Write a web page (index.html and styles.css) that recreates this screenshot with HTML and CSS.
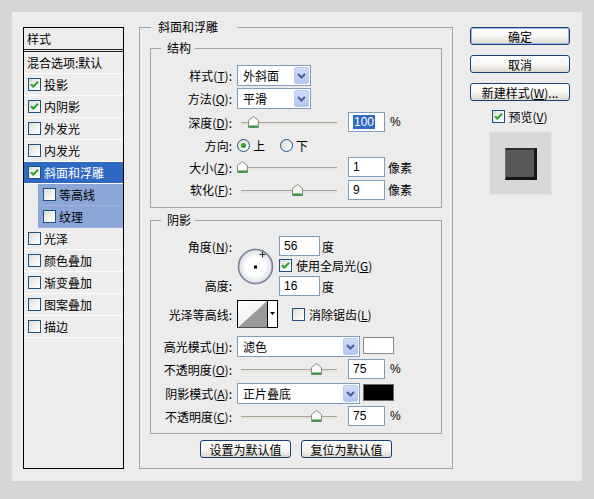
FILE: index.html
```html
<!DOCTYPE html>
<html>
<head>
<meta charset="utf-8">
<link rel="stylesheet" href="styles.css">
</head>
<body>
<div class="dialog">
  <div class="list">
    <div class="lhead">样式</div>
    <div class="row plain">混合选项:默认</div>
    <div class="row"><span class="cb"><svg width="11" height="11" viewBox="0 0 11 11"><path d="M2 5.2 L4.3 7.6 L9 2.8" stroke="#21a121" stroke-width="2" fill="none"/></svg></span>投影</div>
    <div class="row"><span class="cb"><svg width="11" height="11" viewBox="0 0 11 11"><path d="M2 5.2 L4.3 7.6 L9 2.8" stroke="#21a121" stroke-width="2" fill="none"/></svg></span>内阴影</div>
    <div class="row"><span class="cb"></span>外发光</div>
    <div class="row"><span class="cb"></span>内发光</div>
    <div class="row selected"><span class="cb"><svg width="11" height="11" viewBox="0 0 11 11"><path d="M2 5.2 L4.3 7.6 L9 2.8" stroke="#21a121" stroke-width="2" fill="none"/></svg></span>斜面和浮雕</div>
    <div class="row sub"><span class="cb"></span>等高线</div>
    <div class="row sub"><span class="cb"></span>纹理</div>
    <div class="row"><span class="cb"></span>光泽</div>
    <div class="row"><span class="cb"></span>颜色叠加</div>
    <div class="row"><span class="cb"></span>渐变叠加</div>
    <div class="row"><span class="cb"></span>图案叠加</div>
    <div class="row"><span class="cb"></span>描边</div>
  </div>

  <fieldset class="outer">
    <legend class="lg-outer">斜面和浮雕</legend>

    <fieldset class="inner struct">
      <legend class="lg-inner">结构</legend>
      <div class="frow r24">
        <span class="lbl">样式(<u>T</u>):</span>
        <div class="sel w74"><span class="st">外斜面</span><i class="arr"><svg width="15" height="17" viewBox="0 0 15 17"><path d="M4 7 L7.5 10.5 L11 7" stroke="#4a5f8e" stroke-width="2" fill="none"/></svg></i></div>
      </div>
      <div class="frow r23">
        <span class="lbl">方法(<u>Q</u>):</span>
        <div class="sel w74"><span class="st">平滑</span><i class="arr"><svg width="15" height="17" viewBox="0 0 15 17"><path d="M4 7 L7.5 10.5 L11 7" stroke="#4a5f8e" stroke-width="2" fill="none"/></svg></i></div>
      </div>
      <div class="frow r24">
        <span class="lbl">深度(<u>D</u>):</span>
        <div class="sld"><span class="thumb" style="left:11px"><svg width="11" height="12" viewBox="0 0 11 12"><path d="M0.5 4.5 L5.5 0.5 L10.5 4.5 L10.5 11.5 L0.5 11.5 Z" fill="#fbfbf8" stroke="#8a8a84"/><path d="M1 10.5 H10" stroke="#2f9a3a" stroke-width="2"/></svg></span></div>
        <div class="inp"><span class="hl">100</span></div>
        <span class="unit">%</span>
      </div>
      <div class="frow r22">
        <span class="lbl">方向:</span>
        <span class="rad on"></span><span class="rtxt">上</span>
        <span class="rad gap"></span><span class="rtxt">下</span>
      </div>
      <div class="frow r22">
        <span class="lbl">大小(<u>Z</u>):</span>
        <div class="sld"><span class="thumb" style="left:0px"><svg width="11" height="12" viewBox="0 0 11 12"><path d="M0.5 4.5 L5.5 0.5 L10.5 4.5 L10.5 11.5 L0.5 11.5 Z" fill="#fbfbf8" stroke="#8a8a84"/><path d="M1 10.5 H10" stroke="#2f9a3a" stroke-width="2"/></svg></span></div>
        <div class="inp">1</div>
        <span class="unit px">像素</span>
      </div>
      <div class="frow r23">
        <span class="lbl">软化(<u>F</u>):</span>
        <div class="sld"><span class="thumb" style="left:55px"><svg width="11" height="12" viewBox="0 0 11 12"><path d="M0.5 4.5 L5.5 0.5 L10.5 4.5 L10.5 11.5 L0.5 11.5 Z" fill="#fbfbf8" stroke="#8a8a84"/><path d="M1 10.5 H10" stroke="#2f9a3a" stroke-width="2"/></svg></span></div>
        <div class="inp">9</div>
        <span class="unit px">像素</span>
      </div>
    </fieldset>

    <fieldset class="inner shadow">
      <legend class="lg-inner">阴影</legend>
      <div class="angle">
        <span class="lbl a1">角度(<u>N</u>):</span>
        <span class="dial"><svg width="37" height="37" viewBox="0 0 37 37"><defs><radialGradient id="dg" cx="50%" cy="50%" r="50%"><stop offset="0.55" stop-color="#ffffff"/><stop offset="1" stop-color="#d9dde6"/></radialGradient></defs><circle cx="18.5" cy="18.5" r="17" fill="url(#dg)" stroke="#7a8296" stroke-width="1.6"/><rect x="17" y="17.5" width="3" height="3" fill="#000"/><path d="M25.5 3.5 V9.5 M22.5 6.5 H28.5" stroke="#222" stroke-width="1"/></svg></span>
        <span class="c3 r1"><span class="inp num">56</span><span class="unit">度</span></span>
        <span class="c3 r2"><span class="cb"><svg width="11" height="11" viewBox="0 0 11 11"><path d="M2 5.2 L4.3 7.6 L9 2.8" stroke="#21a121" stroke-width="2" fill="none"/></svg></span><span class="ctxt">使用全局光(<u>G</u>)</span></span>
        <span class="lbl a3">高度:</span>
        <span class="c3 r3"><span class="inp num">16</span><span class="unit">度</span></span>
      </div>
      <div class="frow contour-row">
        <span class="lbl">光泽等高线:</span>
        <span class="contour"><svg width="41" height="28" viewBox="0 0 41 28"><defs><linearGradient id="cg" x1="0" y1="0" x2="1" y2="1"><stop offset="0" stop-color="#ffffff"/><stop offset="1" stop-color="#e6e6e6"/></linearGradient></defs><rect x="0.5" y="0.5" width="40" height="27" fill="url(#cg)" stroke="#000"/><polygon points="1,27.5 30,1 30,27.5" fill="#9a9a9a"/><line x1="30.5" y1="0" x2="30.5" y2="28" stroke="#000"/><rect x="31" y="1" width="9" height="26" fill="#fff"/><polygon points="33,12 38,12 35.5,15" fill="#000"/></svg></span>
        <span class="cb aa"></span><span class="ctxt">消除锯齿(<u>L</u>)</span>
      </div>
      <div class="frow hl-row">
        <span class="lbl">高光模式(<u>H</u>):</span>
        <div class="sel w123"><span class="st">滤色</span><i class="arr"><svg width="15" height="17" viewBox="0 0 15 17"><path d="M4 7 L7.5 10.5 L11 7" stroke="#4a5f8e" stroke-width="2" fill="none"/></svg></i></div>
        <span class="sw white"></span>
      </div>
      <div class="frow r22">
        <span class="lbl">不透明度(<u>O</u>):</span>
        <div class="sld"><span class="thumb" style="left:74px"><svg width="11" height="12" viewBox="0 0 11 12"><path d="M0.5 4.5 L5.5 0.5 L10.5 4.5 L10.5 11.5 L0.5 11.5 Z" fill="#fbfbf8" stroke="#8a8a84"/><path d="M1 10.5 H10" stroke="#2f9a3a" stroke-width="2"/></svg></span></div>
        <div class="inp">75</div>
        <span class="unit">%</span>
      </div>
      <div class="frow sh-row">
        <span class="lbl">阴影模式(<u>A</u>):</span>
        <div class="sel w123"><span class="st">正片叠底</span><i class="arr"><svg width="15" height="17" viewBox="0 0 15 17"><path d="M4 7 L7.5 10.5 L11 7" stroke="#4a5f8e" stroke-width="2" fill="none"/></svg></i></div>
        <span class="sw black"></span>
      </div>
      <div class="frow r22">
        <span class="lbl">不透明度(<u>C</u>):</span>
        <div class="sld"><span class="thumb" style="left:74px"><svg width="11" height="12" viewBox="0 0 11 12"><path d="M0.5 4.5 L5.5 0.5 L10.5 4.5 L10.5 11.5 L0.5 11.5 Z" fill="#fbfbf8" stroke="#8a8a84"/><path d="M1 10.5 H10" stroke="#2f9a3a" stroke-width="2"/></svg></span></div>
        <div class="inp">75</div>
        <span class="unit">%</span>
      </div>
    </fieldset>

    <div class="btnrow">
      <button class="btn wide">设置为默认值</button>
      <button class="btn wide">复位为默认值</button>
    </div>
  </fieldset>

  <div class="side">
    <button class="btn side-btn def">确定</button>
    <button class="btn side-btn">取消</button>
    <button class="btn side-btn">新建样式(<u>W</u>)...</button>
    <div class="preview-chk"><span class="cb"><svg width="11" height="11" viewBox="0 0 11 11"><path d="M2 5.2 L4.3 7.6 L9 2.8" stroke="#21a121" stroke-width="2" fill="none"/></svg></span><span class="ctxt">预览(<u>V</u>)</span></div>
    <div class="preview"><div class="sq"></div></div>
  </div>
</div>
</body>
</html>
```

FILE: styles.css
```css
* { box-sizing: border-box; }
html, body { margin: 0; padding: 0; }
body {
  width: 594px;
  height: 499px;
  overflow: hidden;
  background: #d6d6d6;
  font-family: "Noto Sans CJK SC", "Noto Sans", sans-serif;
  font-size: 12px;
  color: #000;
}
u { text-decoration: underline; text-underline-offset: 1px; }

.dialog {
  margin: 12px;
  width: 570px;
  height: 469px;
  background: #ececec;
  display: flex;
  align-items: flex-start;
  padding: 15px 12px 0 11px;
}

/* left style list */
.list {
  flex: none;
  width: 101px;
  height: 442px;
  border: 1px solid #000;
  background: #ededed;
}
.lhead {
  height: 24px;
  line-height: 21px;
  padding-left: 3px;
  border-bottom: 3px double #222;
}
.row {
  height: 22px;
  border-bottom: 1px solid #fbfbfb;
  display: flex;
  align-items: center;
  padding-left: 4px;
  line-height: 21px;
  white-space: nowrap;
}
.row.plain { padding-left: 3px; }
.row.selected { background: #3168c4; color: #fff; }
.row.sub { margin-left: 14px; background: #8ca6d8; padding-left: 5px; border-bottom-color: #9fb4de; }
.row .cb { margin-right: 3px; }

.cb {
  flex: none;
  width: 13px;
  height: 13px;
  border: 1px solid #1c5180;
  background: linear-gradient(135deg, #dcdcd6 0%, #f4f4f2 60%, #ffffff 100%);
  display: inline-flex;
  align-items: center;
  justify-content: center;
}
.cb svg { display: block; }

/* fieldsets */
fieldset {
  margin: 0;
  padding: 0;
  min-width: 0;
  border: 1px solid #a3a3a3;
}
legend {
  height: 16px;
  line-height: 16px;
  padding: 0;
}
.outer {
  flex: none;
  width: 314px;
  height: 450px;
  margin: -8px 0 0 15px;
  padding: 5px 10px 0 10px;
}
.lg-outer { margin-left: 1px; padding: 0 19px 0 7px; }
.lg-inner { margin-left: 10px; padding: 0 4px 0 6px; }
.inner { width: 292px; }
.struct { padding: 7px 0 6px 0; }
.shadow { margin-top: 4px; padding: 8px 0 6px 0; }

.frow { display: flex; align-items: center; white-space: nowrap; }
.r22 { height: 22px; }
.r23 { height: 23px; }
.r24 { height: 24px; }
.lbl {
  flex: none;
  width: 81px;
  margin-right: 5px;
  text-align: right;
}

/* select */
.sel {
  flex: none;
  height: 21px;
  border: 1px solid #7f9db9;
  background: #fff;
  display: flex;
  padding: 1px;
}
.w74 { width: 74px; }
.w123 { width: 123px; }
.st { flex: 1; padding-left: 4px; line-height: 17px; }
.arr {
  flex: none;
  width: 15px;
  height: 17px;
  border-radius: 2px;
  background: linear-gradient(#cfdcfb, #b3c7f5);
  border: 1px solid #b8c9ef;
  display: flex;
  align-items: center;
  justify-content: center;
}
.arr svg { display: block; margin: -1px; }

/* slider */
.sld {
  position: relative;
  flex: none;
  width: 104px;
  height: 12px;
}
.sld::before {
  content: "";
  position: absolute;
  left: 4px;
  right: 4px;
  top: 6px;
  height: 2px;
  border-top: 1px solid #a4a49c;
  background: #e4e4dc;
  border-radius: 1px 0 0 1px;
}
.thumb { position: absolute; top: 0; width: 11px; height: 12px; }
.thumb svg { display: block; }

/* inputs */
.inp {
  flex: none;
  width: 37px;
  height: 20px;
  margin-left: 7px;
  border: 1px solid #7f9db9;
  background: #fff;
  padding-left: 4px;
  line-height: 18px;
  font-family: "Liberation Sans", sans-serif;
  font-size: 12px;
}
.inp.num { width: 41px; margin-left: 0; }
.hl { background: #316ac5; color: #fff; padding: 0 1px; }
.unit { margin-left: 5px; font-family: "Liberation Sans", "Noto Sans CJK SC", sans-serif; }
.unit.px { margin-left: 3px; font-family: "Noto Sans CJK SC", sans-serif; }

/* radios */
.rad {
  flex: none;
  width: 13px;
  height: 13px;
  border-radius: 50%;
  border: 1px solid #1c5180;
  background: linear-gradient(135deg, #dcdcd6, #ffffff);
  display: inline-flex;
  align-items: center;
  justify-content: center;
}
.rad.on::after {
  content: "";
  width: 5px;
  height: 5px;
  border-radius: 50%;
  background: #2aa02a;
}
.rad.gap { margin-left: 15px; }
.rtxt { margin-left: 3px; }

/* angle block */
.angle {
  display: grid;
  grid-template-columns: 81px 36px 1fr;
  grid-template-rows: 20px 19px 21px;
  column-gap: 5px;
  height: 60px;
  align-items: center;
}
.angle .lbl { margin-right: 0; }
.a1 { grid-column: 1; grid-row: 1; }
.a3 { grid-column: 1; grid-row: 3; }
.dial { grid-column: 2; grid-row: 1 / 4; align-self: center; width: 37px; height: 37px; margin-top: 1px; }
.dial svg { display: block; }
.c3 { grid-column: 3; display: flex; align-items: center; margin-left: 1px; }
.r1 { grid-row: 1; }
.r2 { grid-row: 2; }
.r3 { grid-row: 3; align-self: end; }
.c3 .unit { margin-left: 2px; font-family: "Noto Sans CJK SC", sans-serif; }
.ctxt { margin-left: 4px; }

.contour-row { height: 28px; margin-top: 4px; }
.contour { flex: none; width: 41px; height: 28px; }
.contour svg { display: block; }
.cb.aa { margin-left: 14px; }

.hl-row { height: 23px; margin-top: 7px; }
.sh-row { height: 23px; margin-top: 2px; }
.sw {
  flex: none;
  width: 31px;
  height: 17px;
  margin-left: 3px;
  border: 1px solid #8a8a8a;
  align-self: flex-start;
  margin-top: 2px;
}
.sw.white { background: #fff; }
.sw.black { background: #000; border-color: #6a6a6a; }

/* buttons */
.btn {
  height: 18px;
  padding: 0;
  border: 1px solid #1a3f72;
  border-radius: 3px;
  background: linear-gradient(#ffffff 0%, #f5f5f2 55%, #dcd8ce 100%);
  font-family: "Noto Sans CJK SC", sans-serif;
  font-size: 12px;
  line-height: 15px;
  color: #000;
  text-align: center;
}
.btnrow {
  display: flex;
  justify-content: center;
  gap: 10px;
  margin-top: 6px;
}
.btn.wide { width: 91px; }

.side {
  flex: none;
  width: 100px;
  margin-left: 17px;
  display: flex;
  flex-direction: column;
  align-items: center;
}
.side-btn { width: 100px; margin-bottom: 10px; }
.btn.def { box-shadow: inset 0 0 0 1px #9dbbea; }
.preview-chk {
  height: 15px;
  margin-top: -2px;
  display: flex;
  align-items: center;
  white-space: nowrap;
}
.preview-chk .ctxt { margin-left: 3px; }
.preview {
  margin-top: 7px;
  width: 63px;
  height: 64px;
  background: #d8d8d8;
  border: 1px solid #e6e6e6;
  display: flex;
  align-items: center;
  justify-content: center;
}
.sq {
  width: 32px;
  height: 32px;
  margin-left: 1px;
  margin-top: 1px;
  background: #585858;
  border-top: 2px solid #2e2e2e;
  border-left: 1px solid #6e6e6e;
  border-right: 3px solid #141414;
  border-bottom: 3px solid #141414;
}
```
